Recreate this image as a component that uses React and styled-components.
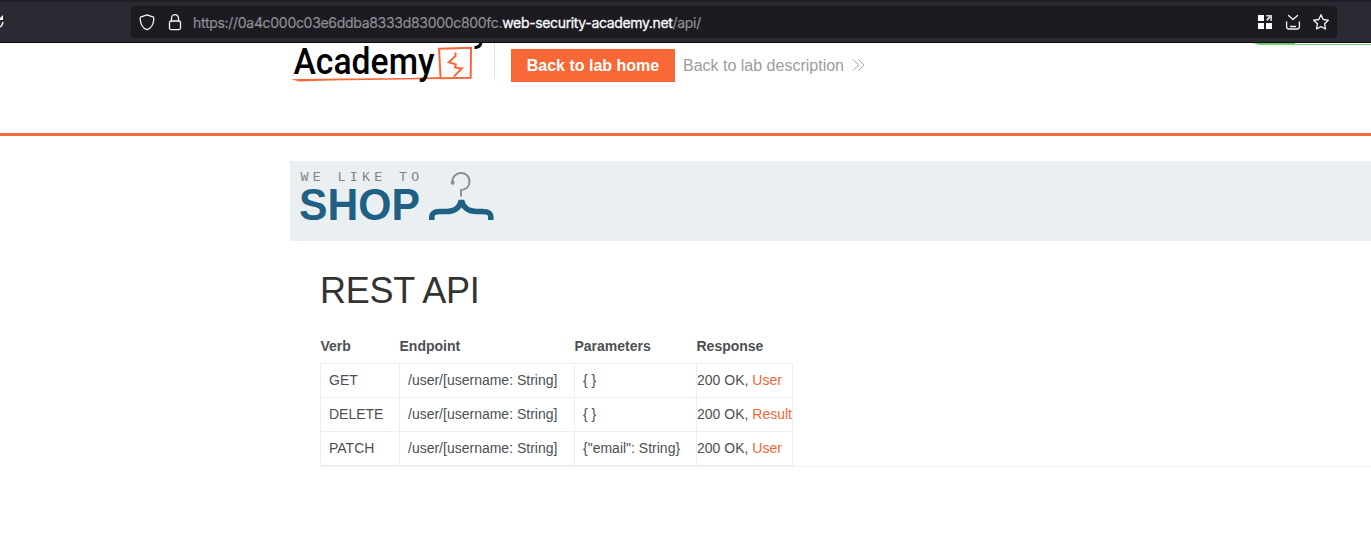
import React from "react";
import styled, { createGlobalStyle } from "styled-components";

const GlobalStyle = createGlobalStyle`
  * { box-sizing: border-box; }
  html, body { margin: 0; background: #fff; overflow: hidden; }
  body { font-family: "Liberation Sans", Arial, sans-serif; color: #4d4f53; }
`;

const Page = styled.div`
  width: 100%;
  height: 540px;
  overflow: hidden;
`;

const Chrome = styled.div`
  display: flex;
  height: 43px;
  padding: 4px 34px 4px 0;
  background: #2b2a33;
  border-top: 2px solid #1f1e25;
  border-bottom: 1px solid #0c0c0d;
`;

const Reload = styled.svg`
  flex: none;
  width: 4px;
  height: 32px;
  margin-right: 127px;
`;

const AddressBar = styled.div`
  display: flex;
  flex: 1;
  align-items: center;
  height: 32px;
  padding: 0 7px;
  border-radius: 4px;
  background: #1c1b22;
`;

const BarIcon = styled.svg`
  flex: none;
  width: 18px;
  height: 18px;
  margin-right: ${(p) => p.$gap || 0}px;
  fill: none;
  stroke: #f5f5f7;
  stroke-width: 1.3;
  stroke-linecap: round;
  stroke-linejoin: round;
`;

const Url = styled.div`
  flex: 1;
  padding-top: 2px;
  font: 400 14px/18px Inter, sans-serif;
  letter-spacing: -0.3px;
  color: #8f8e95;
  -webkit-text-stroke: 0.2px #8f8e95;
  white-space: nowrap;
`;

const Host = styled.span`
  color: #fbfbfe;
  letter-spacing: -0.35px;
  -webkit-text-stroke: 0.3px #fbfbfe;
`;

const LabHeader = styled.header`
  display: flex;
  align-items: flex-start;
  height: 93px;
  padding-left: 290px;
  border-bottom: 3px solid #f26b3c;
`;

const AcademyLogo = styled.svg`
  flex: none;
  width: 204px;
  height: 48px;
`;

const HeaderLinks = styled.nav`
  display: flex;
  align-items: center;
  height: 35px;
  padding-left: 16px;
  border-left: 1px solid #dfe1e2;
`;

const HomeButton = styled.a`
  width: 164px;
  height: 33px;
  margin: 10px 8px 0 0;
  background: #f76836;
  color: #fff;
  font-size: 16px;
  font-weight: 700;
  line-height: 33px;
  text-align: center;
  white-space: nowrap;
`;

const DescriptionLink = styled.a`
  display: flex;
  align-items: center;
  gap: 8px;
  margin-top: 10px;
  color: #9c9c9c;
  font-size: 16px;
  line-height: 33px;
  white-space: nowrap;
`;

const Chevrons = styled.svg`
  width: 13px;
  height: 12px;
  margin-bottom: 1px;
  fill: none;
  stroke: #a3a3a3;
  stroke-width: 1;
`;

const LabStatus = styled.div`
  width: 118px;
  height: 2px;
  margin-left: auto;
  border-bottom: 1px solid #7ad672;
  background: linear-gradient(90deg, #6dcb65 42px, #fff 42px);
  clip-path: polygon(0 0, 100% 0, 100% 100%, 6px 100%);
`;

const Content = styled.main`
  padding: 25px 0 0 290px;
`;

const Banner = styled.section`
  height: 80px;
  background: #eaeff2;
`;

const ShopLogo = styled.svg`
  display: block;
  width: 220px;
  height: 80px;
`;

const Panel = styled.section`
  margin-left: 30px;
  border-bottom: 1px solid #eef0f1;
`;

const Title = styled.h1`
  margin: 0;
  padding-top: 29px;
  color: #333332;
  font-size: 36px;
  font-weight: 400;
  line-height: 42px;
  letter-spacing: -0.25px;
`;

const Table = styled.table`
  width: 472px;
  margin-top: 17px;
  border-collapse: collapse;
  table-layout: fixed;
  font-size: 14px;
  line-height: 16px;
  white-space: nowrap;
`;

const HeadCell = styled.th`
  height: 34px;
  padding: 0;
  text-align: left;
  font-weight: 700;
`;

const Cell = styled.td`
  height: 34px;
  padding: 0 0 0 ${(p) => (p.$flush ? 0 : 8)}px;
  border: 1px solid #eaeff2;
`;

const TypeLink = styled.a`
  color: #f56633;
`;

const widths = [79, 175, 122, 96];
const rows = [
  ["GET", "{ }", "User"],
  ["DELETE", "{ }", "Result"],
  ["PATCH", '{"email": String}', "User"],
];

const Col = styled.col`
  width: ${(p) => p.$width}px;
`;

export default function App() {
  return (
    <Page>
      <GlobalStyle />
      <Chrome>
        <Reload viewBox="0 0 4 32">
          <path d="M3 9V14H0V12Z" fill="#fff" />
          <path d="M3 16Q2 20 0 21" fill="none" stroke="#fff" strokeWidth="1.3" />
        </Reload>
        <AddressBar>
          <BarIcon viewBox="0 0 18 18" $gap={10}>
            <path d="M9 1.8 15.5 4.2Q16 4.5 15.8 6.2C15.5 10.5 13.4 15.2 9 16.7C4.6 15.2 2.5 10.5 2.2 6.2Q2 4.5 2.5 4.2Z" />
          </BarIcon>
          <BarIcon viewBox="0 0 18 18" $gap={9}>
            <rect x="3.5" y="8" width="11" height="8.6" rx="1.5" />
            <path d="M5.5 8V5.2a3.5 3.5 0 0 1 7 0V8" />
          </BarIcon>
          <Url>
            https://0a4c000c03e6ddba8333d83000c800fc.
            <Host>web-security-academy.net</Host>/api/
          </Url>
          <BarIcon viewBox="0 0 18 18" $gap={10}>
            <g stroke="none" fill="#fff">
              <rect x="2" y="2" width="6" height="6" />
              <rect x="2" y="10" width="6" height="6" />
              <rect x="10" y="10" width="6" height="6" />
              <path d="M10 2h6v6h-1.6V5L11.6 8 10 6.4 12.9 3.6H10Z" opacity=".8" />
            </g>
          </BarIcon>
          <BarIcon viewBox="0 0 18 18" $gap={10}>
            <path d="m4.5 2.5 4.5 4 4.5-4M2.6 9v4.5Q2.6 16 5 16h8q2.4 0 2.4-2.5V9M6.5 13.5h5" />
          </BarIcon>
          <BarIcon viewBox="0 0 18 18">
            <path d="m9 1.8 2.2 4.7 5.1.7-3.7 3.6.9 5.2L9 13.6 4.5 16l.9-5.2L1.7 7.2l5.1-.7Z" />
          </BarIcon>
        </AddressBar>
      </Chrome>

      <LabHeader>
        <AcademyLogo viewBox="0 0 204 48">
          <path d="M1 36.2C50 35.2 110 35.6 151 34V36C100 36.8 50 37 9 38.4Z" fill="#f76836" />
          <g fill="none" stroke="#f76836" strokeWidth="2">
            <path d="M150.6 35.2 149 5.8 181 4.8 180.7 34.7Z" />
            <path d="M165.5 9.5V13L158.8 19.3 165.8 21.4 165 24.5 171.8 25.4 163.8 33.6" />
          </g>
          <text
            x="3.5"
            y="31.2"
            textLength="141"
            lengthAdjust="spacingAndGlyphs"
            fontFamily="Roboto, sans-serif"
            fontSize="36.5"
            fontWeight="500"
          >
            Academy
          </text>
          <path d="M191 0Q189.5 5 184.5 4.3" fill="none" stroke="#000" strokeWidth="3" />
        </AcademyLogo>
        <HeaderLinks>
          <HomeButton>Back to lab home</HomeButton>
          <DescriptionLink>
            Back to lab description
            <Chevrons viewBox="0 0 13 12">
              <path d="m1 .5 5.5 5.5L1 11.5M6.5.5 12 6l-5.5 5.5" />
            </Chevrons>
          </DescriptionLink>
        </HeaderLinks>
        <LabStatus />
      </LabHeader>

      <Content>
        <Banner>
          <ShopLogo viewBox="0 0 220 80">
            <text
              x="10.5"
              y="20"
              textLength="123"
              lengthAdjust="spacingAndGlyphs"
              fontFamily="Liberation Mono, monospace"
              fontSize="13"
              letterSpacing="4.2"
              fill="#7f8384"
            >
              WE LIKE TO
            </text>
            <text
              x="9"
              y="59"
              textLength="121"
              lengthAdjust="spacingAndGlyphs"
              fontFamily="Liberation Sans, Arial, sans-serif"
              fontSize="44.5"
              fontWeight="700"
              fill="#1f6085"
            >
              SHOP
            </text>
            <circle cx="162.6" cy="21.8" r="2" fill="#8b8f90" />
            <path
              d="M162.4 21.5C161.5 9.5 179.5 8.5 179.5 20.5C179.5 25.5 176 29 171 29V35.5"
              fill="none"
              stroke="#8b8f90"
              strokeWidth="2"
            />
            <path
              d="M141.8 59V56.5C141.8 51.5 144.5 50.5 150 50.5H156C165 50.5 169.5 47 171.4 39.5C173.5 47 178 50.5 187 50.5H192C198 50.5 200.8 51.5 200.8 56.5V59"
              fill="none"
              stroke="#1f6085"
              strokeWidth="5.6"
              strokeLinejoin="bevel"
            />
          </ShopLogo>
        </Banner>
        <Panel>
          <Title>REST API</Title>
          <Table>
            <colgroup>
              {widths.map((w) => (
                <Col key={w} $width={w} />
              ))}
            </colgroup>
            <thead>
              <tr>
                <HeadCell>Verb</HeadCell>
                <HeadCell>Endpoint</HeadCell>
                <HeadCell>Parameters</HeadCell>
                <HeadCell>Response</HeadCell>
              </tr>
            </thead>
            <tbody>
              {rows.map(([verb, params, type]) => (
                <tr key={verb}>
                  <Cell>{verb}</Cell>
                  <Cell>/user/[username: String]</Cell>
                  <Cell>{params}</Cell>
                  <Cell $flush>
                    200 OK, <TypeLink>{type}</TypeLink>
                  </Cell>
                </tr>
              ))}
            </tbody>
          </Table>
        </Panel>
      </Content>
    </Page>
  );
}
